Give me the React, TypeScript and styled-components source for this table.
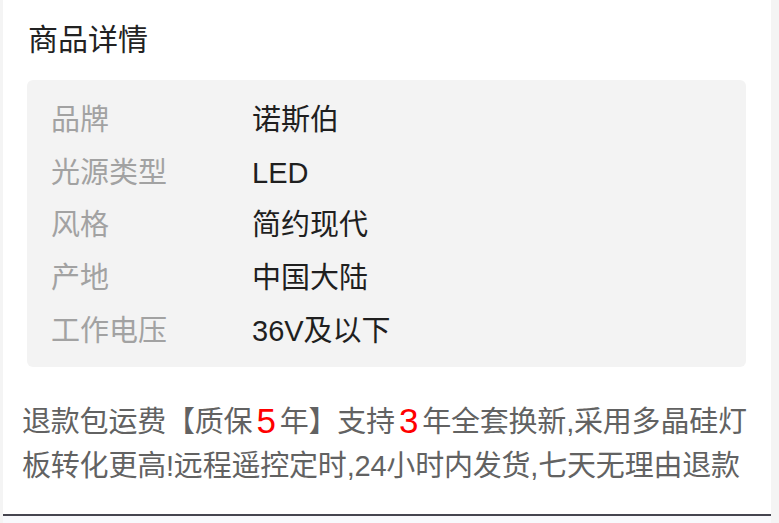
import styled, { createGlobalStyle } from "styled-components";

const GlobalStyle = createGlobalStyle`
    html, body {
        margin: 0;
        padding: 0;
        background: #f4f4f4;
    }
    body {
        font-family: "Liberation Sans", "Noto Sans CJK SC", sans-serif;
    }
`;

const Page = styled.div`
    width: 779px;
    height: 523px;
    padding-left: 3px;
    box-sizing: border-box;
    overflow: hidden;
`;

const Card = styled.div`
    width: 768px;
    background: #ffffff;
    padding: 20px 25px 0 24px;
    box-sizing: border-box;
`;

const Title = styled.h2`
    margin: 0 0 20px 1px;
    font-size: 30px;
    line-height: 40px;
    font-weight: 400;
    color: #222;
`;

const SpecBox = styled.div`
    background: #f3f3f3;
    border-radius: 6px;
    padding: 14px 24px 10px;
`;

const SpecRow = styled.div`
    display: grid;
    grid-template-columns: 201px 1fr;
    height: 52.6px;
    align-content: center;
    align-items: baseline;
    font-size: 29px;
    line-height: 34px;
`;

const SpecLabel = styled.span`
    color: #a2a2a2;
`;

const SpecValue = styled.span`
    color: #1f1f1f;
`;

const Description = styled.p`
    margin: 33px 0 0 -5px;
    font-size: 29px;
    line-height: 44px;
    color: #626262;
    white-space: nowrap;
    letter-spacing: -0.2px;
`;

const Highlight = styled.span`
    color: #ff0000;
    font-size: 35px;
    padding: 0 4px;
    vertical-align: -1px;
    line-height: 0;
`;

const BottomRule = styled.div`
    margin: 26px -25px 0 -24px;
    height: 2px;
    background: #45454f;
`;

const Below = styled.div`
    margin: 0 -25px 0 -24px;
    height: 20px;
    background: #f8f9fc;
`;

const specs = [
    { label: "品牌", value: "诺斯伯" },
    { label: "光源类型", value: "LED" },
    { label: "风格", value: "简约现代" },
    { label: "产地", value: "中国大陆" },
    { label: "工作电压", value: "36V及以下" },
];

export default function App() {
    return (
        <Page>
            <GlobalStyle />
            <Card>
                <Title>商品详情</Title>
                <SpecBox>
                    {specs.map((s) => (
                        <SpecRow key={s.label}>
                            <SpecLabel>{s.label}</SpecLabel>
                            <SpecValue>{s.value}</SpecValue>
                        </SpecRow>
                    ))}
                </SpecBox>
                <Description>
                    退款包运费【质保<Highlight>5</Highlight>年】支持<Highlight>3</Highlight>年全套换新,采用多晶硅灯
                    <br />
                    板转化更高!远程遥控定时,24小时内发货,七天无理由退款
                </Description>
                <BottomRule />
                <Below />
            </Card>
        </Page>
    );
}
